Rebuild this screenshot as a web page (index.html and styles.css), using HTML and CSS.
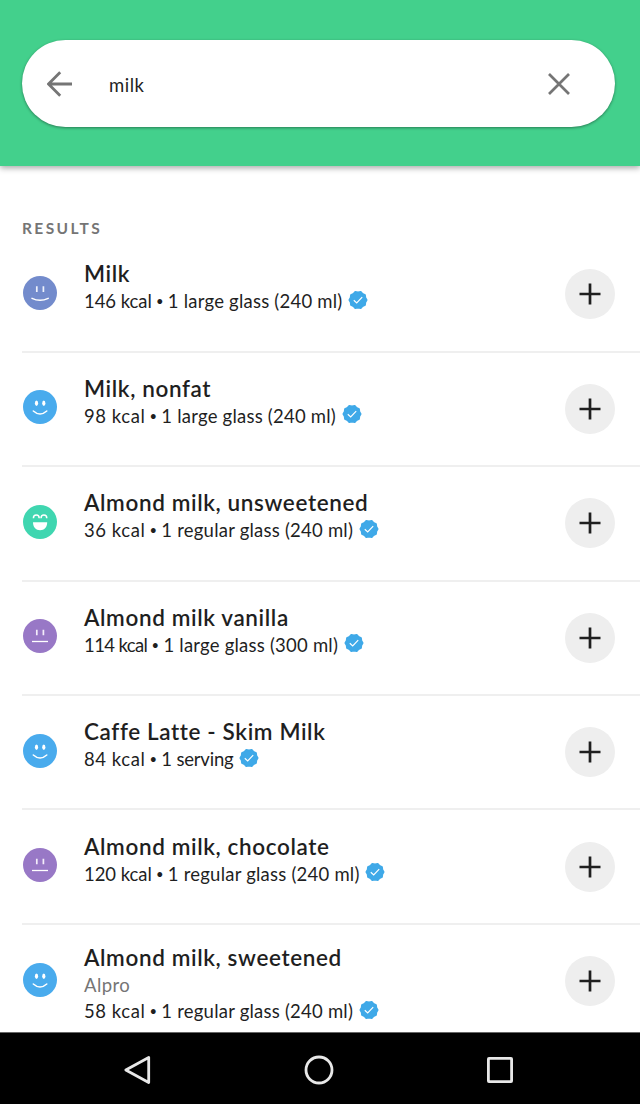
FILE: index.html
```html
<!DOCTYPE html>
<html lang="en">
<head>
<meta charset="UTF-8">
<meta name="viewport" content="width=device-width, initial-scale=1.0">
<title>Food search</title>
<link rel="stylesheet" href="styles.css">
</head>
<body>
<svg class="sprite">
  <symbol id="face-ok" viewBox="0 0 34 34">
    <circle cx="17" cy="17" r="17" fill="#738bcc"/>
    <path d="M13.8 10.3v5.6M20.4 10.3v5.6" stroke="#eef2fc" stroke-width="1.7"/>
    <path d="M9 22.3Q17 26.4 25.2 22.3" fill="none" stroke="#fff" stroke-width="1.5" stroke-linecap="round"/>
  </symbol>
  <symbol id="face-good" viewBox="0 0 34 34">
    <circle cx="17" cy="17" r="17" fill="#49abed"/>
    <ellipse cx="13.5" cy="13.2" rx="1.6" ry="2.7" fill="#fff"/>
    <ellipse cx="20.8" cy="13.2" rx="1.6" ry="2.7" fill="#fff"/>
    <path d="M10.3 21Q17 27 23.8 21" fill="none" stroke="#fff" stroke-width="1.5" stroke-linecap="round"/>
  </symbol>
  <symbol id="face-great" viewBox="0 0 34 34">
    <circle cx="17" cy="17" r="17" fill="#3fd6b0"/>
    <path d="M10.4 13.2a2.9 3.2 0 0 1 5.8 0M18 13.2a2.9 3.2 0 0 1 5.8 0" fill="none" stroke="#fff" stroke-width="1.5"/>
    <path d="M10 17.3h14.2c0 4.8-2.8 8-7.1 8s-7.1-3.2-7.1-8z" fill="#fff"/>
  </symbol>
  <symbol id="face-meh" viewBox="0 0 34 34">
    <circle cx="17" cy="17" r="17" fill="#9878c6"/>
    <path d="M13.8 10.8v5.4M20.4 10.8v5.4" stroke="#f3edfa" stroke-width="1.7"/>
    <path d="M9 22.5h16" stroke="#fff" stroke-width="1.3"/>
  </symbol>
  <symbol id="verified" viewBox="-10 -10 20 20">
    <path d="M8.6 0 7.3 2.4 7 5 4.5 6.2 2.7 8.2 0 7.7-2.7 8.2-4.5 6.2-7 5-7.3 2.4-8.6 0-7.3-2.4-7-5-4.5-6.2-2.7-8.2 0-7.7 2.7-8.2 4.5-6.2 7-5 7.3-2.4z" fill="#3fa9e8" stroke="#3fa9e8" stroke-width="1.8" stroke-linejoin="round"/>
    <path d="M-4.2.3-1.3 3 4.2-2.8" fill="none" stroke="#fff" stroke-width="1.2"/>
  </symbol>
  <symbol id="plus" viewBox="0 0 22 22">
    <path d="M11 .5v21M.5 11h21" stroke="#1f1f1f" stroke-width="2.7"/>
  </symbol>
</svg>

<div class="app">
  <header class="header">
    <div class="search-bar">
      <svg class="back" viewBox="0 0 26 26"><path d="M13.2 1.2 1.5 13l11.7 11.8M1.5 13H25" fill="none" stroke="#757575" stroke-width="2.8"/></svg>
      <span class="query">milk</span>
      <svg class="clear" viewBox="0 0 22 22"><path d="M1 1l20 20M21 1 1 21" stroke="#757575" stroke-width="2.7"/></svg>
    </div>
  </header>

  <main class="results">
    <h2 class="section-title">RESULTS</h2>
    <ul class="food-list">
      <li class="food">
        <svg class="face"><use href="#face-ok"/></svg>
        <div class="food-info">
          <div class="name">Milk</div>
          <div class="detail"><span class="kcal hundreds">146 kcal</span><span class="dot">•</span><span class="portion">1 large glass (240 ml)</span><svg class="badge"><use href="#verified"/></svg></div>
        </div>
        <button class="add"><svg><use href="#plus"/></svg></button>
      </li>
      <li class="food">
        <svg class="face"><use href="#face-good"/></svg>
        <div class="food-info">
          <div class="name">Milk, nonfat</div>
          <div class="detail"><span class="kcal">98 kcal</span><span class="dot">•</span><span class="portion">1 large glass (240 ml)</span><svg class="badge"><use href="#verified"/></svg></div>
        </div>
        <button class="add"><svg><use href="#plus"/></svg></button>
      </li>
      <li class="food">
        <svg class="face"><use href="#face-great"/></svg>
        <div class="food-info">
          <div class="name">Almond milk, unsweetened</div>
          <div class="detail"><span class="kcal">36 kcal</span><span class="dot">•</span><span class="portion">1 regular glass (240 ml)</span><svg class="badge"><use href="#verified"/></svg></div>
        </div>
        <button class="add"><svg><use href="#plus"/></svg></button>
      </li>
      <li class="food">
        <svg class="face"><use href="#face-meh"/></svg>
        <div class="food-info">
          <div class="name">Almond milk vanilla</div>
          <div class="detail"><span class="kcal narrow">114 kcal</span><span class="dot">•</span><span class="portion">1 large glass (300 ml)</span><svg class="badge"><use href="#verified"/></svg></div>
        </div>
        <button class="add"><svg><use href="#plus"/></svg></button>
      </li>
      <li class="food">
        <svg class="face"><use href="#face-good"/></svg>
        <div class="food-info">
          <div class="name">Caffe Latte - Skim Milk</div>
          <div class="detail"><span class="kcal">84 kcal</span><span class="dot">•</span><span class="portion short">1 serving</span><svg class="badge"><use href="#verified"/></svg></div>
        </div>
        <button class="add"><svg><use href="#plus"/></svg></button>
      </li>
      <li class="food">
        <svg class="face"><use href="#face-meh"/></svg>
        <div class="food-info">
          <div class="name">Almond milk, chocolate</div>
          <div class="detail"><span class="kcal hundreds">120 kcal</span><span class="dot">•</span><span class="portion">1 regular glass (240 ml)</span><svg class="badge"><use href="#verified"/></svg></div>
        </div>
        <button class="add"><svg><use href="#plus"/></svg></button>
      </li>
      <li class="food branded">
        <svg class="face"><use href="#face-good"/></svg>
        <div class="food-info">
          <div class="name">Almond milk, sweetened</div>
          <div class="brand">Alpro</div>
          <div class="detail"><span class="kcal">58 kcal</span><span class="dot">•</span><span class="portion">1 regular glass (240 ml)</span><svg class="badge"><use href="#verified"/></svg></div>
        </div>
        <button class="add"><svg><use href="#plus"/></svg></button>
      </li>
    </ul>
  </main>

  <nav class="system-nav">
    <svg viewBox="0 0 30 30"><path d="M25.7 2.5v25L2.8 15z" fill="none" stroke="#e8e8e8" stroke-width="2.8" stroke-linejoin="round"/></svg>
    <svg viewBox="0 0 30 30"><circle cx="15" cy="15" r="13" fill="none" stroke="#e8e8e8" stroke-width="2.8"/></svg>
    <svg viewBox="0 0 30 30"><rect x="3.4" y="3.4" width="23.2" height="23.2" rx=".6" fill="none" stroke="#e8e8e8" stroke-width="2.8"/></svg>
  </nav>
</div>
</body>
</html>
```
FILE: styles.css
```css
*{margin:0;padding:0;box-sizing:border-box;}
:root{
  --green:#43d08c;
  --text:#1f1f1f;
  --muted:#757575;
  --line:#efefef;
}
body{font-family:Lato,"Open Sans",sans-serif;background:#fff;color:var(--text);}
svg{display:block;flex:none;}
.sprite{position:absolute;width:0;height:0;}
.app{width:640px;height:1104px;display:flex;flex-direction:column;overflow:hidden;}
.header{flex:none;height:166px;padding:40px 25px 0 22px;background:var(--green);box-shadow:0 2px 6px rgba(0,0,0,.35);}
.search-bar{display:flex;align-items:center;height:87px;padding:0 45px 0 25px;border-radius:44px;background:#fff;box-shadow:0 1px 3px rgba(0,0,0,.4);}
.back{width:26px;height:26px;}
.query{flex:1;padding:3px 0 0 36px;font-size:18.5px;line-height:24px;letter-spacing:.5px;}
.clear{width:22px;height:22px;}
.results{flex:1;min-height:0;overflow:hidden;padding:52px 0 0 22px;}
.section-title{height:20.2px;font-size:15.5px;line-height:20px;font-weight:700;letter-spacing:2.4px;color:var(--muted);}
.food-list{list-style:none;}
.food{display:flex;align-items:center;height:114.45px;padding:0 25px 0 1px;border-bottom:2px solid var(--line);}
.face{width:34px;height:34px;margin:-3px 27px 0 0;}
.food-info{flex:1;margin-top:-13px;}
.name{font-size:22.5px;line-height:28px;font-weight:600;letter-spacing:.62px;}
.detail{display:flex;align-items:center;font-size:18.5px;line-height:27px;}
.kcal{letter-spacing:.55px;}
.kcal.hundreds{letter-spacing:-.05px;}
.kcal.narrow{letter-spacing:-.6px;}
.dot{width:16px;font-size:13px;text-align:center;}
.portion{letter-spacing:.22px;}
.portion.short{letter-spacing:-.2px;}
.badge{width:20px;height:20px;margin:-4px 0 0 5.5px;}
.branded .food-info{margin-top:7px;}
.brand{font-size:18.5px;line-height:26px;letter-spacing:.4px;color:var(--muted);}
.add{display:flex;align-items:center;justify-content:center;width:50px;height:50px;border:none;border-radius:50%;background:#eee;}
.add svg{width:22px;height:22px;}
.system-nav{flex:none;display:flex;justify-content:center;align-items:center;gap:151px;height:72px;padding:3px 2px 0 0;background:#000;border-top:1px solid #666;}
.system-nav svg{width:30px;height:30px;}
```
